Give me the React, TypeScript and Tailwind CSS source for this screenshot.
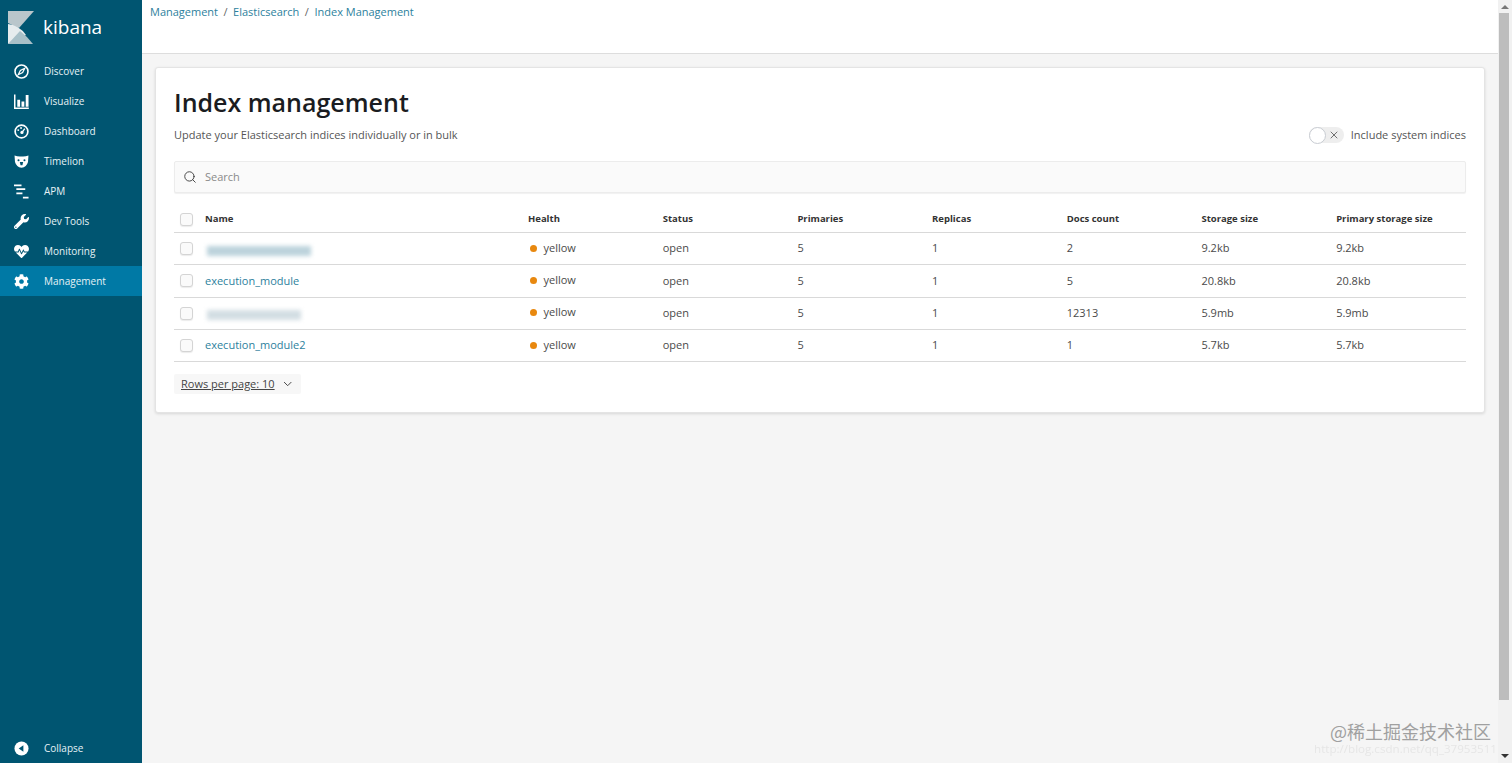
import { Search, X, ChevronDown } from 'lucide-react'
import { FaWrench, FaCog, FaHeartbeat } from 'react-icons/fa'

const font = { fontFamily: '"Open Sans", sans-serif' }

function CompassIcon() {
  return (
    <svg viewBox="0 0 16 16" className="w-[15px] h-[15px]">
      <circle cx="8" cy="8" r="6.9" fill="none" stroke="white" strokeWidth="1.7" />
      <path d="M11.5 4.5 L9.2 9.2 L4.5 11.5 L6.8 6.8 Z" fill="none" stroke="white" strokeWidth="1.3" />
    </svg>
  )
}

function BarsIcon() {
  return (
    <svg viewBox="0 0 16 16" className="w-[15px] h-[15px]">
      <path d="M0.8 0.5v14.7h15" fill="none" stroke="white" strokeWidth="1.6" />
      <path d="M3.5 6h3v7.5h-3zM8 8h3v5.5H8zM12.5 1h3v12.5h-3z" fill="white" />
    </svg>
  )
}

function DashIcon() {
  return (
    <svg viewBox="0 0 16 16" className="w-[15px] h-[15px]">
      <circle cx="8" cy="8" r="6.8" fill="none" stroke="white" strokeWidth="1.8" />
      <circle cx="8.5" cy="9" r="1.7" fill="white" />
      <circle cx="4.5" cy="6.5" r="1" fill="white" />
      <circle cx="7.5" cy="4.2" r="1" fill="white" />
      <path d="M9 8.5 L11.5 5" stroke="white" strokeWidth="1.4" />
    </svg>
  )
}

function BearIcon() {
  return (
    <svg viewBox="0 0 16 14" className="w-[15px] h-[13px]">
      <path d="M0.5 0.5 Q4 2 8 1.6 Q12 2 15.5 0.5 L15 7.5 Q13.5 13 8 13.7 Q2.5 13 1 7.5 Z" fill="white" />
      <circle cx="4.8" cy="5.6" r="1.1" fill="#005571" />
      <circle cx="11.2" cy="5.6" r="1.1" fill="#005571" />
      <path d="M6.2 7.5 h3.6 l-0.8 3.6 h-2 z" fill="#005571" />
    </svg>
  )
}

function ApmIcon() {
  return (
    <svg viewBox="0 0 16 16" className="w-[15px] h-[15px]">
      <path d="M0 0.5h8v2H0zM2.5 4.5h9.5v2H2.5zM2.5 9h6.5v2H2.5zM9.5 13.5h6v2h-6z" fill="white" />
    </svg>
  )
}

function CollapseIcon() {
  return (
    <svg viewBox="0 0 16 16" className="w-[15px] h-[15px]">
      <circle cx="8" cy="8" r="7.5" fill="white" />
      <path d="M10 4.5 V11.5 L5 8 Z" fill="#005571" />
    </svg>
  )
}

const icon = 'w-[15px] h-[15px] text-white'

const navItems = [
  { label: 'Discover', icon: <CompassIcon /> },
  { label: 'Visualize', icon: <BarsIcon /> },
  { label: 'Dashboard', icon: <DashIcon /> },
  { label: 'Timelion', icon: <BearIcon /> },
  { label: 'APM', icon: <ApmIcon /> },
  { label: 'Dev Tools', icon: <FaWrench className={icon} /> },
  { label: 'Monitoring', icon: <FaHeartbeat className={icon} /> },
  { label: 'Management', icon: <FaCog className={icon} />, active: true },
]

const columns = ['Health', 'Status', 'Primaries', 'Replicas', 'Docs count', 'Storage size', 'Primary storage size']

const rows = [
  { name: '', blur: 'a', docs: '2', storage: '9.2kb' },
  { name: 'execution_module', docs: '5', storage: '20.8kb' },
  { name: '', blur: 'b', docs: '12313', storage: '5.9mb' },
  { name: 'execution_module2', docs: '1', storage: '5.7kb' },
]

function Checkbox() {
  return <span className="block w-[13px] h-[13px] rounded-[3px] border border-[#d4d4d4] bg-[#fafafa] shadow-[0_1px_1px_rgba(0,0,0,0.08)]" />
}

function Sidebar() {
  return (
    <aside className="w-[142px] shrink-0 bg-[#005571] flex flex-col text-[#e6f2f6] text-[10px]">
      <div className="h-[56px] flex items-start pl-2 pt-[11px] gap-[9px]">
        <svg viewBox="0 0 26 33" className="w-[26px] h-[33px]">
          <path d="M0 0 H26 L11 17 L0 12 Z" fill="#b9c6cb" />
          <path d="M0 13 Q11 14 18 24 L0 33 Z" fill="#e6ecee" />
          <path d="M0 33 L12 20 Q20 26 25 33 Z" fill="#a8c0c8" />
        </svg>
        <span className="text-white text-[19px] font-medium leading-[33px]">kibana</span>
      </div>
      <nav className="flex flex-col">
        {navItems.map((item) => (
          <div
            key={item.label}
            className={`h-[30px] flex items-center pl-[14px] gap-[15px] ${item.active ? 'bg-[#0079a5]' : ''}`}
          >
            <span className="w-[15px] h-[15px] flex items-center justify-center">{item.icon}</span>
            <span className="mt-[1px]">{item.label}</span>
          </div>
        ))}
      </nav>
      <div className="mt-auto h-[30px] flex items-center pl-[14px] gap-[15px]">
        <CollapseIcon />
        <span className="mt-[1px]">Collapse</span>
      </div>
    </aside>
  )
}

function IndexTable() {
  return (
    <div className="text-[11px] text-[#4a4a4a]">
      <div className="flex items-center h-[40px] pt-[14px] border-b border-[#d9d9d9] font-bold text-[9.5px] text-[#333]">
        <div className="w-[31px] pl-[6px] shrink-0">
          <Checkbox />
        </div>
        <div className="w-[323px] shrink-0">Name</div>
        {columns.map((c) => (
          <div key={c} className="w-[134.7px] shrink-0 whitespace-nowrap">{c}</div>
        ))}
      </div>
      {rows.map((r, i) => (
        <div key={i} className="flex items-center h-[32.3px] border-b border-[#d9d9d9]">
          <div className="w-[31px] pl-[6px] shrink-0">
            <Checkbox />
          </div>
          <div className="w-[323px] shrink-0">
            {r.name ? (
              <span className="text-[#2d7f9d]">{r.name}</span>
            ) : (
              <span
                className={`block h-[10px] blur-[2px] mt-[4px] ${
                  r.blur === 'a' ? 'w-[104px] ml-[2px] bg-[#bcd3dc]' : 'w-[94px] ml-[2px] bg-[#d3dee3]'
                }`}
              />
            )}
          </div>
          <div className="w-[134.7px] shrink-0 flex items-center gap-[6.5px] pl-[2px] mt-[-1px]">
            <span className="w-[7px] h-[7px] rounded-full bg-[#e8880f]" />
            <span>yellow</span>
          </div>
          <div className="w-[134.7px] shrink-0">open</div>
          <div className="w-[134.7px] shrink-0">5</div>
          <div className="w-[134.7px] shrink-0">1</div>
          <div className="w-[134.7px] shrink-0">{r.docs}</div>
          <div className="w-[134.7px] shrink-0">{r.storage}</div>
          <div className="w-[134.7px] shrink-0">{r.storage}</div>
        </div>
      ))}
    </div>
  )
}

function Scrollbar() {
  return (
    <div className="absolute right-0 top-0 h-full w-[14px] bg-[#f1f1f1] flex flex-col items-center">
      <div className="mt-[5px] w-0 h-0 border-x-[4px] border-x-transparent border-b-[4px] border-b-[#777]" />
      <div className="mt-[4px] ml-[-2px] w-[10px] h-[687px] bg-[#bdbdbd]" />
      <div className="mt-auto mb-[5px] w-0 h-0 border-x-[4px] border-x-transparent border-t-[4px] border-t-[#333]" />
    </div>
  )
}

export default function App() {
  return (
    <div style={font} className="relative flex h-[763px] w-[1512px] overflow-hidden bg-[#f5f5f5]">
      <Sidebar />
      <main className="flex-1 flex flex-col min-w-0">
        <div className="h-[54px] bg-white border-b border-[#dddddd] pl-2 pt-[4px] text-[11px] text-[#2d7f9d] flex gap-[5.5px] items-start">
          <span>Management</span>
          <span className="text-[#666]">/</span>
          <span>Elasticsearch</span>
          <span className="text-[#666]">/</span>
          <span>Index Management</span>
        </div>
        <div className="pl-[13px] pr-[13px] pt-[13px]">
          <section className="bg-white w-[1330px] h-[346px] rounded-[3px] border border-[#e4e4e4] shadow-[0_1px_3px_rgba(0,0,0,0.12)] pt-[16px] px-[18px]">
            <h1 className="text-[25px] leading-[36px] font-semibold text-[#1a1c21]">Index management</h1>
            <div className="flex items-center justify-between mt-[5px] h-[20px] text-[11px] text-[#555]">
              <span>Update your Elasticsearch indices individually or in bulk</span>
              <div className="flex items-center gap-[7px]">
                <span className="relative block w-[35px] h-[16px] rounded-full bg-[#eeeeee]">
                  <span className="absolute left-0 top-0 w-[17px] h-[17px] rounded-full bg-white border border-[#c8ccd2]" />
                  <X className="absolute right-[4px] top-[2px] w-[12px] h-[12px] text-[#444]" strokeWidth={1.5} />
                </span>
                <span>Include system indices</span>
              </div>
            </div>
            <div className="mt-[16px] h-[32px] flex items-center pl-[8px] gap-[8px] bg-[#fafafa] border border-[#ececec] rounded-[2px] shadow-[0_1px_1px_rgba(0,0,0,0.06)] text-[11px] text-[#8a8a8a]">
              <Search className="w-[14px] h-[14px] text-[#333]" strokeWidth={1.5} />
              <span className="mt-[1px]">Search</span>
            </div>
            <IndexTable />
            <div className="mt-[12px] inline-flex items-center gap-[6px] h-[20px] w-[127px] px-[7px] bg-[#f7f7f7] rounded-[2px] text-[11px] text-[#444]">
              <span className="underline whitespace-nowrap">Rows per page: 10</span>
              <ChevronDown className="w-[14px] h-[14px]" strokeWidth={1.75} />
            </div>
          </section>
        </div>
      </main>
      <div className="absolute right-[21px] bottom-[23px] text-[18px] text-[#a0a0a0] leading-none" style={{ fontFamily: '"Noto Sans CJK SC", sans-serif' }}>@稀土掘金技术社区</div>
      <div className="absolute right-[15px] bottom-[8px] text-[11.6px] text-[#e6e6e6] leading-none blur-[0.5px]">http://blog.csdn.net/qq_37953511</div>
      <Scrollbar />
    </div>
  )
}
